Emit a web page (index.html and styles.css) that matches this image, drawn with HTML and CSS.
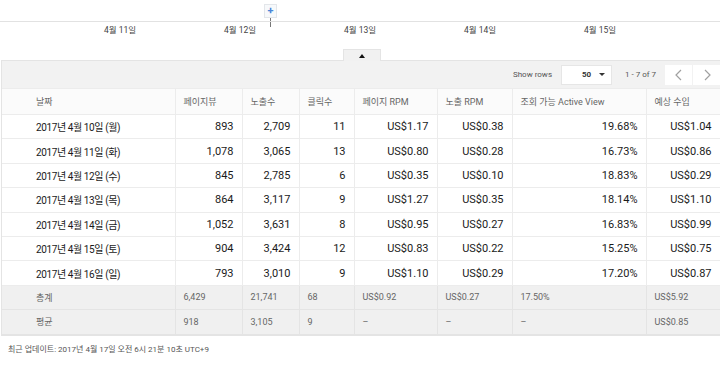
FILE: index.html
```html
<!DOCTYPE html>
<html lang="ko">
<head>
    <meta charset="UTF-8">
    <title>실적 보고서</title>
    <link rel="stylesheet" href="styles.css">
</head>

<body>
    <section class="chart">
        <div class="marker">
            <span class="marker-box">+</span>
            <span class="marker-line"></span>
        </div>
        <div class="axis">
            <span class="tick">4월 11일</span>
            <span class="tick">4월 12일</span>
            <span class="tick">4월 13일</span>
            <span class="tick">4월 14일</span>
            <span class="tick">4월 15일</span>
        </div>
        <div class="collapse"><span class="arrow-up"></span></div>
    </section>

    <section class="panel">
        <div class="toolbar">
            <span class="label">Show rows</span>
            <div class="select">
                <span>50</span>
                <span class="caret"></span>
            </div>
            <span class="range">1 - 7 of 7</span>
            <button class="page-btn">
                <svg width="10" height="12" viewBox="0 0 10 12"><path d="M7 1 L2 6 L7 11" fill="none" stroke="#a0a0a0" stroke-width="1.2"/></svg>
            </button>
            <button class="page-btn">
                <svg width="10" height="12" viewBox="0 0 10 12"><path d="M3 1 L8 6 L3 11" fill="none" stroke="#a0a0a0" stroke-width="1.2"/></svg>
            </button>
        </div>

        <table class="report">
            <colgroup>
                <col style="width: 173px">
                <col style="width: 67px">
                <col style="width: 57px">
                <col style="width: 55px">
                <col style="width: 83px">
                <col style="width: 75px">
                <col style="width: 134px">
                <col style="width: 74px">
            </colgroup>
            <thead>
                <tr>
                    <th class="first">날짜</th>
                    <th>페이지뷰</th>
                    <th>노출수</th>
                    <th>클릭수</th>
                    <th>페이지 RPM</th>
                    <th>노출 RPM</th>
                    <th>조회 가능 Active View</th>
                    <th>예상 수입</th>
                </tr>
            </thead>
            <tbody id="rows"></tbody>
            <tfoot>
                <tr>
                    <td class="first">총계</td>
                    <td>6,429</td>
                    <td>21,741</td>
                    <td>68</td>
                    <td>US$0.92</td>
                    <td>US$0.27</td>
                    <td>17.50%</td>
                    <td>US$5.92</td>
                </tr>
                <tr>
                    <td class="first">평균</td>
                    <td>918</td>
                    <td>3,105</td>
                    <td>9</td>
                    <td>–</td>
                    <td>–</td>
                    <td>–</td>
                    <td>US$0.85</td>
                </tr>
            </tfoot>
        </table>
    </section>

    <p class="updated">최근 업데이트: 2017년 4월 17일 오전 6시 21분 10초 UTC+9</p>

    <script>
        let data = [
            ["2017년 4월 10일 (월)", "893", "2,709", "11", "US$1.17", "US$0.38", "19.68%", "US$1.04"],
            ["2017년 4월 11일 (화)", "1,078", "3,065", "13", "US$0.80", "US$0.28", "16.73%", "US$0.86"],
            ["2017년 4월 12일 (수)", "845", "2,785", "6", "US$0.35", "US$0.10", "18.83%", "US$0.29"],
            ["2017년 4월 13일 (목)", "864", "3,117", "9", "US$1.27", "US$0.35", "18.14%", "US$1.10"],
            ["2017년 4월 14일 (금)", "1,052", "3,631", "8", "US$0.95", "US$0.27", "16.83%", "US$0.99"],
            ["2017년 4월 15일 (토)", "904", "3,424", "12", "US$0.83", "US$0.22", "15.25%", "US$0.75"],
            ["2017년 4월 16일 (일)", "793", "3,010", "9", "US$1.10", "US$0.29", "17.20%", "US$0.87"]
        ];

        let dest = document.querySelector("#rows");

        data.forEach(rij => {
            let tr = document.createElement("tr");
            rij.forEach((waarde, i) => {
                let td = document.createElement("td");
                td.textContent = waarde;
                if (i == 0) td.className = "first";
                tr.appendChild(td);
            });
            dest.appendChild(tr);
        });
    </script>
</body>
</html>
```

FILE: styles.css
```css
body {
    margin: 0;
    font-family: Roboto, "Noto Sans CJK KR", sans-serif;
    color: #222;
    background-color: white;
}

/* chart strip */
.chart {
    position: relative;
    height: 60px;
}

.marker {
    position: absolute;
    left: 264px;
    top: 4px;
    display: flex;
    flex-direction: column;
    align-items: center;
}

.marker-box {
    width: 11px;
    height: 12px;
    border: 1px solid #e3e6ea;
    background-color: #f7f9fb;
    color: #4a86d8;
    font-size: 11px;
    line-height: 12px;
    text-align: center;
    font-weight: bold;
}

.marker-line {
    width: 1px;
    height: 9px;
    background-color: #777;
}

.axis {
    position: absolute;
    left: 0;
    right: 0;
    top: 21px;
    border-top: 1px solid #e2e2e2;
    display: flex;
    padding-left: 60px;
}

.tick {
    width: 120px;
    text-align: center;
    font-size: 8.5px;
    color: #444;
    padding-top: 1px;
}

.collapse {
    position: absolute;
    left: 343px;
    top: 49px;
    width: 36px;
    height: 11px;
    border: 1px solid #e4e4e4;
    border-bottom: none;
    background-color: #f1f1f1;
    display: flex;
    justify-content: center;
    align-items: center;
}

.arrow-up {
    width: 0;
    height: 0;
    border-left: 3px solid transparent;
    border-right: 3px solid transparent;
    border-bottom: 4px solid #111;
}

/* panel */
.panel {
    margin-left: 1px;
    border: 1px solid #e4e4e4;
    border-right: none;
    background-color: #f2f2f2;
}

.toolbar {
    height: 27px;
    display: flex;
    justify-content: flex-end;
    align-items: center;
    font-size: 8px;
    color: #555;
}

.label {
    margin-right: 9px;
}

.select {
    width: 51px;
    height: 20px;
    box-sizing: border-box;
    background-color: white;
    border: 1px solid #e6e6e6;
    display: flex;
    justify-content: space-between;
    align-items: center;
    padding: 0 6px 0 20px;
    font-weight: bold;
    color: #333;
}

.caret {
    width: 0;
    height: 0;
    border-left: 3px solid transparent;
    border-right: 3px solid transparent;
    border-top: 3px solid #333;
}

.range {
    margin: 0 8px 0 13px;
}

.page-btn {
    width: 27px;
    height: 20px;
    margin-left: 1px;
    border: none;
    background-color: white;
    display: flex;
    justify-content: center;
    align-items: center;
    padding: 0;
}

.report {
    width: 100%;
    border-collapse: collapse;
    table-layout: fixed;
    background-color: white;
}

.report th,
.report td {
    border: 1px solid #ececec;
    padding: 0 8px;
    white-space: nowrap;
    overflow: hidden;
}

.report th:first-child,
.report td:first-child {
    border-left: none;
}

.report th {
    height: 25px;
    text-align: left;
    font-weight: normal;
    font-size: 9px;
    color: #666;
    background-color: #fbfbfb;
}

.report tbody td {
    height: 23.4px;
    text-align: right;
    font-size: 11px;
    color: #1a1a1a;
}

.report tbody td.first {
    font-size: 10px;
    letter-spacing: -0.4px;
}

.report .first {
    padding-left: 34px;
    text-align: left;
}

.report tfoot td {
    height: 23.5px;
    text-align: left;
    font-size: 9px;
    color: #666;
    background-color: #f0f0f0;
    border-color: #e4e4e4;
}

.updated {
    margin: 7px 0 0 8px;
    font-size: 8px;
    color: #555;
}
```
